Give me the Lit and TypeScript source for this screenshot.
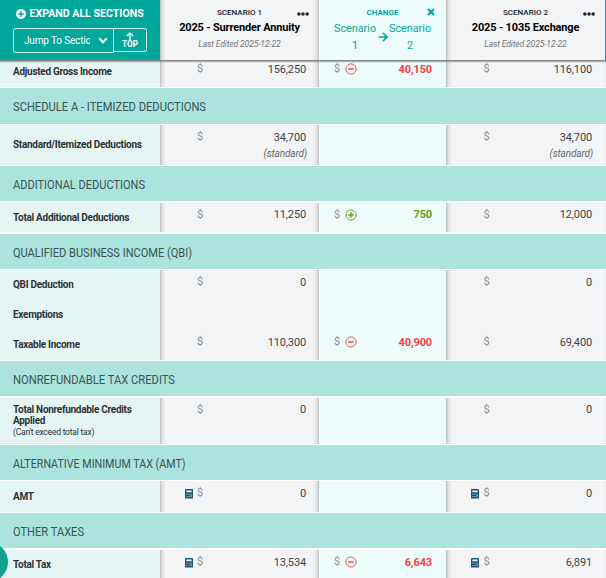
import { LitElement, html, svg, css, nothing } from "lit";
import { customElement } from "lit/decorators.js";

type Change = { sign: "plus" | "minus"; value: string };
type Row = {
  label: string;
  note?: string;
  height: number;
  values?: [string, string];
  sub?: string;
  calc?: boolean;
  tight?: boolean;
  change?: Change;
};
type Group = { title?: string; width?: number; band?: number; before?: number; after?: number; rows: Row[] };

const GROUPS: Group[] = [
  {
    rows: [
      { label: "Adjusted Gross Income", height: 30, values: ["156,250", "116,100"], change: { sign: "minus", value: "40,150" } },
    ],
  },
  {
    title: "SCHEDULE A - ITEMIZED DEDUCTIONS", width: 193, band: 36, before: 1, after: 1,
    rows: [{ label: "Standard/Itemized Deductions", height: 40, values: ["34,700", "34,700"], sub: "(standard)" }],
  },
  {
    title: "ADDITIONAL DEDUCTIONS", width: 132, band: 35, before: 1, after: 2,
    rows: [
      { label: "Total Additional Deductions", height: 29, values: ["11,250", "12,000"], tight: true, change: { sign: "plus", value: "750" } },
    ],
  },
  {
    title: "QUALIFIED BUSINESS INCOME (QBI)", width: 179, band: 35, before: 2, after: 1,
    rows: [
      { label: "QBI Deduction", height: 30, values: ["0", "0"] },
      { label: "Exemptions", height: 30 },
      { label: "Taxable Income", height: 30, values: ["110,300", "69,400"], change: { sign: "minus", value: "40,900" } },
    ],
  },
  {
    title: "NONREFUNDABLE TAX CREDITS", width: 162, band: 35, before: 1, after: 2,
    rows: [
      { label: "Total Nonrefundable Credits Applied", note: "(Can't exceed total tax)", height: 46, values: ["0", "0"], tight: true },
    ],
  },
  {
    title: "ALTERNATIVE MINIMUM TAX (AMT)", width: 172.5, band: 35, before: 1, after: 1,
    rows: [{ label: "AMT", height: 31, values: ["0", "0"], calc: true }],
  },
  {
    title: "OTHER TAXES", width: 71, band: 35, before: 1, after: 2,
    rows: [
      { label: "Total Tax", height: 30, values: ["13,534", "6,891"], calc: true, change: { sign: "minus", value: "6,643" } },
    ],
  },
];

const signIcon = (sign: string) => html`<svg class="sign ${sign}" viewBox="0 0 12 12">
  <circle cx="6" cy="6" r="5.1" fill="none" stroke="currentColor" stroke-width="0.9" />
  <path d=${sign === "plus" ? "M3.2 6h5.6M6 3.2v5.6" : "M3.2 6h5.6"} stroke="currentColor" stroke-width="1.4" />
</svg>`;

const calcIcon = html`<svg class="calc" viewBox="0 0 8 10">
  <rect width="8" height="9.6" rx="0.9" fill="#1b5478" />
  <path d="M1.3 1.4h5.4v1.9H1.3z" fill="#dfe9ef" />
  ${svg`<path d="M1.3 4.7h1.2v1H1.3zM3.4 4.7h1.2v1H3.4zM5.5 4.7h1.2v1H5.5zM1.3 7h1.2v1.1H1.3zM3.4 7h1.2v1.1H3.4zM5.5 6h1.2v2.1H5.5z" fill="#9db9c8"/>`}
</svg>`;

const dots = html`<svg class="dots" viewBox="0 0 12 4">
  <circle cx="1.9" cy="2" r="1.75" /><circle cx="6" cy="2" r="1.75" /><circle cx="10.1" cy="2" r="1.75" />
</svg>`;

@customElement("app-root")
export class AppRoot extends LitElement {
  static styles = css`
    :host {
      display: block;
      position: relative;
      width: 606px;
      height: 578px;
      overflow: hidden;
      background: #fff;
      font-family: Roboto, sans-serif;
      color: #3f4347;
    }
    .head, .row { display: grid; grid-template-columns: 160px 159px 127px 160px; }
    .head {
      position: relative;
      z-index: 2;
      height: 60px;
      border-bottom: 1px solid #88898b;
      box-shadow: 0 1px 1px rgba(60, 60, 60, 0.4);
    }
    .tools { background: #00a79b; color: #fff; padding: 7px 0 0 13px; box-sizing: border-box; }
    .expand { display: flex; align-items: center; height: 13px; font-size: 10.6px; font-weight: 700; white-space: nowrap; }
    .expand svg { width: 10px; height: 10px; margin: 0 3.5px 0 3px; flex: none; }
    .jump { display: flex; align-items: flex-start; margin-top: 8px; }
    .select {
      display: flex; align-items: center; box-sizing: border-box; width: 101px; height: 25px;
      border: 1px solid #d9f2f0; border-radius: 3px 0 0 3px; padding: 0 5px 0 10px; font-size: 10px;
    }
    .select span { width: 66px; overflow: hidden; white-space: nowrap; letter-spacing: -0.15px; }
    .select svg { width: 10px; height: 7px; margin-left: auto; }
    .top {
      display: flex; flex-direction: column; align-items: center; box-sizing: border-box; width: 33px; height: 24px;
      border: 1px solid #d9f2f0; border-left: 0; border-radius: 0 3px 3px 0; font-size: 8.2px; font-weight: 700; line-height: 8px; padding-top: 3px;
    }
    .top svg { width: 8px; height: 8px; }
    .scen { position: relative; text-align: center; white-space: nowrap; padding-top: 8px; }
    .first { background: linear-gradient(90deg, #b9babc, #dfe0e2 2px, #f3f4f6 6px, #f3f4f6 153px, #dedfe1 157px, #bcbebf); }
    .second { background: linear-gradient(90deg, #b9bdbe, #dcdddf 2px, #f3f4f6 6px, #f3f4f6 159px, #dcdee1 160px); }
    .scen.second { border-right: 1px solid #54758c; }
    .name { font-size: 8px; line-height: 10px; font-weight: 500; color: #202327; }
    .title { font-size: 11px; letter-spacing: -0.17px; line-height: 14px; margin-top: 3px; font-weight: 700; color: #000; }
    .edited { font-size: 8.6px; letter-spacing: -0.15px; line-height: 11px; margin-top: 4px; font-style: italic; color: #777; }
    .dots { position: absolute; right: 10px; top: 12px; width: 12px; height: 4px; fill: #202327; }
    .diff { position: relative; background: #eefbfb; color: #00a79b; text-align: center; padding-top: 8px; }
    .diff .name { color: #00a79b; font-weight: 700; }
    .close { position: absolute; right: 11px; top: 8px; width: 8px; height: 8px; }
    .pair { display: flex; justify-content: center; font-size: 10.8px; line-height: 17px; margin-top: 2px; }
    .pair span { width: 42px; }
    .pair svg { width: 10px; height: 10px; margin: 12px 1.5px 0 1.5px; flex: none; }
    .body { margin-top: -4px; }
    .label {
      display: flex; flex-direction: column; justify-content: center; box-sizing: border-box; padding: 1px 20px 0 13px;
      background: #e5f5f4; font-size: 10px; letter-spacing: -0.29px; line-height: 10.5px; font-weight: 700; color: #2d3236;
    }
    .label.wide { padding-right: 0; white-space: nowrap; }
    .note { font-size: 8.5px; letter-spacing: -0.22px; font-weight: 400; line-height: 12px; white-space: nowrap; }
    .cell { display: flex; align-items: flex-start; font-size: 11px; line-height: 14px; padding-top: 5px; box-sizing: border-box; }
    .cell.first { padding-left: 24px; padding-right: 13px; }
    .cell.second { padding-left: 24.5px; padding-right: 14px; }
    .cell.mid { background: #eefbfb; padding-left: 15px; padding-right: 14px; }
    .slot { width: 13px; height: 14px; flex: none; }
    .cur { color: #8b8f93; flex: none; }
    .amount { margin-left: auto; text-align: right; line-height: 15px; letter-spacing: -0.13px; }
    .tight .amount { margin-top: -1px; }
    .mid .amount { font-weight: 700; }
    .sub { font-size: 10px; letter-spacing: -0.15px; font-style: italic; line-height: 18px; color: #666a6e; margin-right: -1px; }
    .calc { display: block; width: 8px; height: 10px; margin-top: 3px; margin-left: 0.5px; }
    .sign { width: 12px; height: 12px; margin: 1px 0 0 5px; }
    .minus { color: #ee4248; }
    .plus { color: #669f18; }
    .band { display: flex; align-items: center; background: #abe3dd; padding-left: 13px; }
    .band svg { display: block; height: 20px; overflow: visible; fill: #3b5353; font-size: 13.5px; }
    .bubble { position: absolute; z-index: 3; left: -32px; top: 542px; width: 40px; height: 40px; border-radius: 50%; background: #10a191; }
  `;

  private amount(row: Row, i: 0 | 1) {
    return html`<div class="cell ${i ? "second" : "first"}">
      ${row.values
        ? html`<span class="slot">${row.calc ? calcIcon : nothing}</span><span class="cur">$</span>
            <div class="amount">${row.values[i]}${row.sub ? html`<div class="sub">${row.sub}</div>` : nothing}</div>`
        : nothing}
    </div>`;
  }

  private row(row: Row) {
    const c = row.change;
    return html`<div class="row ${row.tight ? "tight" : ""}" style="height:${row.height}px">
      <div class="label ${row.note ? "" : "wide"}">${row.label}${row.note ? html`<span class="note">${row.note}</span>` : nothing}</div>
      ${this.amount(row, 0)}
      <div class="cell mid">
        ${c ? html`<span class="cur">$</span>${signIcon(c.sign)}<span class="amount ${c.sign}">${c.value}</span>` : nothing}
      </div>
      ${this.amount(row, 1)}
    </div>`;
  }

  private group(g: Group) {
    return html`${g.title
      ? html`<div class="band" style="height:${g.band}px;margin:${g.before}px 0 ${g.after}px">
          <svg width=${g.width!}><text x="0" y="14.5" textLength=${g.width!} lengthAdjust="spacingAndGlyphs">${g.title}</text></svg>
        </div>`
      : nothing}${g.rows.map((r) => this.row(r))}`;
  }

  render() {
    return html`
      <div class="head">
        <div class="tools">
          <div class="expand">
            <svg viewBox="0 0 10 10"><circle cx="5" cy="5" r="5" fill="#fff" /><path d="M5 2.2v5.6M2.2 5h5.6" stroke="#00a79b" stroke-width="1.5" /></svg>
            EXPAND ALL SECTIONS
          </div>
          <div class="jump">
            <div class="select">
              <span>Jump To Section</span>
              <svg viewBox="0 0 10 7"><path d="M1.2 1.2L5 5.2L8.8 1.2" fill="none" stroke="#fff" stroke-width="2" /></svg>
            </div>
            <div class="top">
              <svg viewBox="0 0 8 8"><path d="M4 8V1M1 4L4 1L7 4" fill="none" stroke="#fff" stroke-width="1.3" /></svg>
              TOP
            </div>
          </div>
        </div>
        <div class="scen first">
          <div class="name">SCENARIO 1</div>
          <div class="title">2025 - Surrender Annuity</div>
          <div class="edited">Last Edited 2025-12-22</div>
          ${dots}
        </div>
        <div class="diff">
          <div class="name">CHANGE</div>
          <div class="pair">
            <span>Scenario 1</span>
            <svg viewBox="0 0 10 10"><path d="M0.5 5H8.5M5 1L9 5L5 9" fill="none" stroke="currentColor" stroke-width="1.7" /></svg>
            <span>Scenario 2</span>
          </div>
          <svg class="close" viewBox="0 0 8 8"><path d="M1 1L7 7M7 1L1 7" stroke="currentColor" stroke-width="2.2" /></svg>
        </div>
        <div class="scen second">
          <div class="name">SCENARIO 2</div>
          <div class="title">2025 - 1035 Exchange</div>
          <div class="edited">Last Edited 2025-12-22</div>
          ${dots}
        </div>
      </div>
      <div class="body">${GROUPS.map((g) => this.group(g))}</div>
      <div class="bubble"></div>
    `;
  }
}
